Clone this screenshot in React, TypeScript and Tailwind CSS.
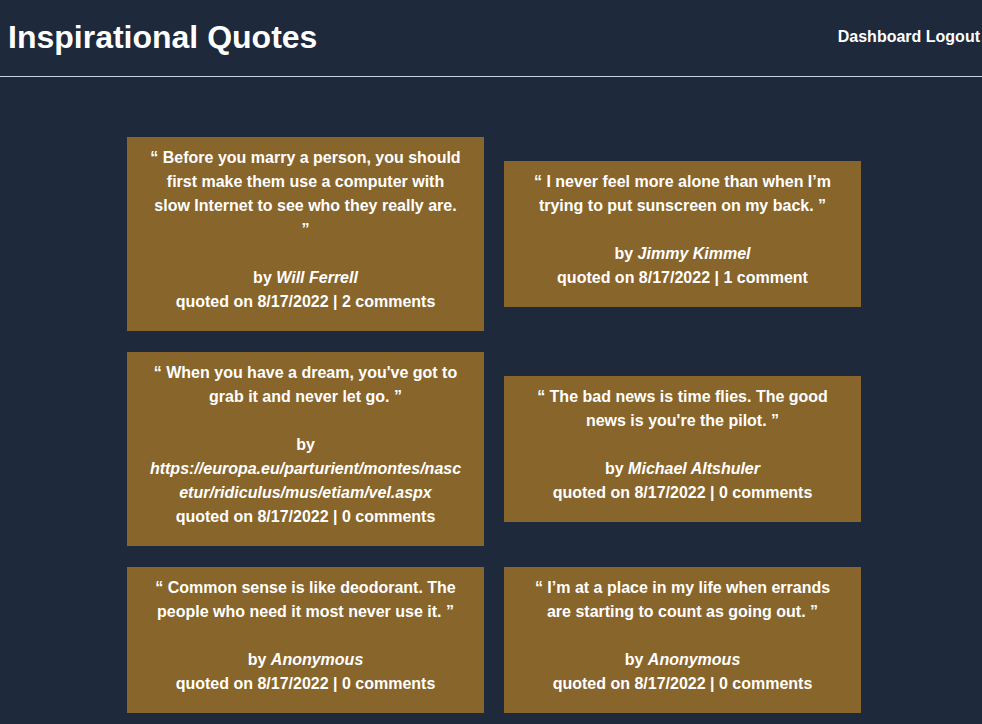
type Quote = {
  text: string;
  author: string;
  comments: number;
};

const quotes: Quote[] = [
  {
    text: "Before you marry a person, you should first make them use a computer with slow Internet to see who they really are.",
    author: "Will Ferrell",
    comments: 2,
  },
  {
    text: "I never feel more alone than when I’m trying to put sunscreen on my back.",
    author: "Jimmy Kimmel",
    comments: 1,
  },
  {
    text: "When you have a dream, you've got to grab it and never let go.",
    author: "https://europa.eu/parturient/montes/nascetur/ridiculus/mus/etiam/vel.aspx",
    comments: 0,
  },
  {
    text: "The bad news is time flies. The good news is you're the pilot.",
    author: "Michael Altshuler",
    comments: 0,
  },
  {
    text: "Common sense is like deodorant. The people who need it most never use it.",
    author: "Anonymous",
    comments: 0,
  },
  {
    text: "I’m at a place in my life when errands are starting to count as going out.",
    author: "Anonymous",
    comments: 0,
  },
];

function QuoteCard({ quote }: { quote: Quote }) {
  return (
    <div className="bg-[#88652b] pt-[9px] pb-[17px] px-[22px] text-center text-white font-bold text-base leading-6 break-words">
      <p>“ {quote.text} ”</p>
      <p className="mt-6">
        by <i>{quote.author}</i>
      </p>
      <p>
        quoted on 8/17/2022 | {quote.comments}{" "}
        {quote.comments === 1 ? "comment" : "comments"}
      </p>
    </div>
  );
}

export default function App() {
  return (
    <div className="min-h-screen bg-[#1e293b] font-['Liberation_Sans',Arial,sans-serif] text-white">
      <header className="flex items-center justify-between h-[77px] pl-2 pr-[2px] pb-[3px] border-b border-[#cbd5e1]">
        <h1 className="text-[32px] font-bold">Inspirational Quotes</h1>
        <nav className="text-base font-bold">
          <a>Dashboard</a> <a>Logout</a>
        </nav>
      </header>
      <main className="grid grid-cols-[357px_357px] gap-x-5 gap-y-[21px] items-center ml-[127px] mt-[60px] pb-3">
        {quotes.map((q, i) => (
          <QuoteCard key={i} quote={q} />
        ))}
      </main>
    </div>
  );
}
